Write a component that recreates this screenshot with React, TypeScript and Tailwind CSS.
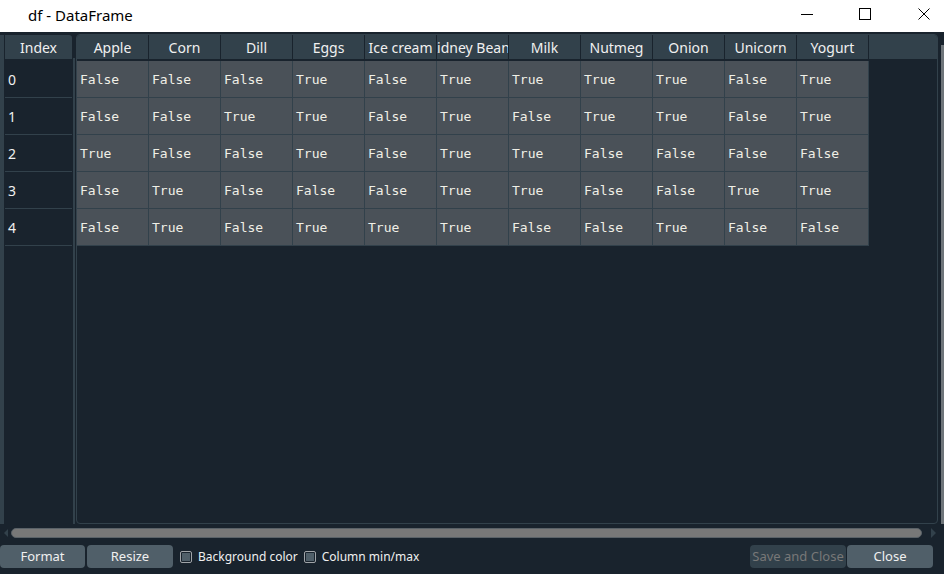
import { useState } from "react"

const columns = ["Apple", "Corn", "Dill", "Eggs", "Ice cream", "Kidney Beans", "Milk", "Nutmeg", "Onion", "Unicorn", "Yogurt"]

const rows: boolean[][] = [
  [false, false, false, true, false, true, true, true, true, false, true],
  [false, false, true, true, false, true, false, true, true, false, true],
  [true, false, false, true, false, true, true, false, false, false, false],
  [false, true, false, false, false, true, true, false, false, true, true],
  [false, true, false, true, true, true, false, false, true, false, false],
]

const sans = "font-['Noto_Sans','Open_Sans',sans-serif]"

function TitleBar() {
  return (
    <div className="h-[32px] bg-white flex items-center shrink-0">
      <div className={`pl-[28px] pb-[2px] text-[15px] text-black ${sans} flex-1`}>df - DataFrame</div>
      <div className="flex items-center h-full mr-[14px] pb-[4px]">
        <div className="w-[12px] h-px bg-black" />
        <div className="w-[46px]" />
        <div className="w-[12px] h-[12px] border border-black" />
        <div className="w-[47px]" />
        <svg width="12" height="12" viewBox="0 0 12 12">
          <path d="M0.5 0.5 L11.5 11.5 M11.5 0.5 L0.5 11.5" stroke="black" strokeWidth="1" fill="none" />
        </svg>
      </div>
    </div>
  )
}

function IndexPanel() {
  return (
    <div className="flex h-full pt-[2px]">
      <div className="w-[4px] bg-[#32414b] mt-[1px]" />
      <div className="w-[1px]" />
      <div className="w-[67px] flex flex-col">
        <div className={`h-[24px] mt-[1px] bg-[#32414b] rounded-tr-[3px] flex items-center justify-center pt-[1px] text-[14px] text-[#f0f0f0] ${sans}`}>
          Index
        </div>
        <div className="h-[2px]" />
        {rows.map((_, i) => (
          <div key={i} className={`h-[37px] border-b border-[#32414b] flex items-center pl-[3px] text-[14px] text-[#f0f0f0] ${sans}`}>
            {i}
          </div>
        ))}
      </div>
      <div className="w-[1px]" />
      <div className="w-[2px] bg-[#32414b] mt-[24px]" />
    </div>
  )
}

function DataPanel() {
  return (
    <div className="h-full pt-[2px] ml-[1px]">
      <div className="w-[862px] h-[490px] border border-[#32414b] rounded-[4px] flex flex-col overflow-hidden">
        <div className="h-[24px] bg-[#32414b] flex shrink-0">
          {columns.map(c => (
            <div key={c} className={`w-[72px] shrink-0 border-r border-[#19232d] flex items-center justify-center pt-[1px] overflow-hidden whitespace-nowrap text-[14px] text-[#f0f0f0] ${sans}`}>
              {c}
            </div>
          ))}
        </div>
        <div className="h-[2px]" />
        <div className="grid grid-cols-[repeat(11,72px)] w-fit">
          {rows.map((r, i) =>
            r.map((v, j) => (
              <div key={`${i}-${j}`} className="h-[37px] bg-[#4a5158] border-r border-b border-[#32414b] flex items-center pl-[3px] pt-[1px] text-[13px] text-[#f0efe6] font-['DejaVu_Sans_Mono',monospace]">
                {v ? "True" : "False"}
              </div>
            ))
          )}
        </div>
      </div>
    </div>
  )
}

function HScroll() {
  return (
    <div className="h-[17px] flex items-center shrink-0">
      <div className="w-[11px] flex justify-center">
        <div className="w-0 h-0 border-y-[4px] border-y-transparent border-r-[4px] border-r-[#32414b]" />
      </div>
      <div className="w-[911px] h-[10px] rounded-full bg-[#787878] border border-[#5a6268]" />
      <div className="flex-1 flex justify-center">
        <div className="w-0 h-0 border-y-[5px] border-y-transparent border-l-[5px] border-l-[#32414b]" />
      </div>
    </div>
  )
}

function CheckBox(props: { label: string }) {
  const [checked, setChecked] = useState(false)
  return (
    <label className={`flex items-center gap-[6px] text-[12px] text-[#f0f0f0] ${sans} cursor-pointer`} onClick={() => setChecked(!checked)}>
      <span className="w-[12px] h-[12px] border border-[#a0a4a8] rounded-[2px] bg-[#19232d] flex items-center justify-center">
        <span className={checked ? "w-[7px] h-[7px] bg-[#148cd2]" : "w-[8px] h-[8px] bg-[#505f69]"} />
      </span>
      {props.label}
    </label>
  )
}

function Footer() {
  return (
    <div className="flex items-start pt-[4px] h-[34px] shrink-0">
      <div className={`flex gap-[2px] text-[13px] ${sans}`}>
        <button className="w-[85px] h-[23px] bg-[#505f69] rounded-[4px] text-[#f0f0f0]">Format</button>
        <button className="w-[86px] h-[23px] bg-[#505f69] rounded-[4px] text-[#f0f0f0]">Resize</button>
      </div>
      <div className="flex items-center gap-[6px] ml-[7px] h-[23px]">
        <CheckBox label="Background color" />
        <CheckBox label="Column min/max" />
      </div>
      <div className={`ml-auto mr-[11px] flex gap-[1px] text-[13px] ${sans}`}>
        <button disabled className="w-[96px] h-[23px] bg-[#32414b] rounded-[4px] text-[#787878]">Save and Close</button>
        <button className="w-[86px] h-[23px] bg-[#505f69] rounded-[4px] text-[#f0f0f0]">Close</button>
      </div>
    </div>
  )
}

export default function App() {
  return (
    <div className="w-[944px] h-[574px] flex flex-col bg-[#19232d] overflow-hidden">
      <TitleBar />
      <div className="h-[492px] flex shrink-0">
        <IndexPanel />
        <DataPanel />
        <div className="w-[3px]" />
        <div className="w-[3px] bg-[#6e757a] mt-[13px]" />
      </div>
      <HScroll />
      <Footer />
    </div>
  )
}
